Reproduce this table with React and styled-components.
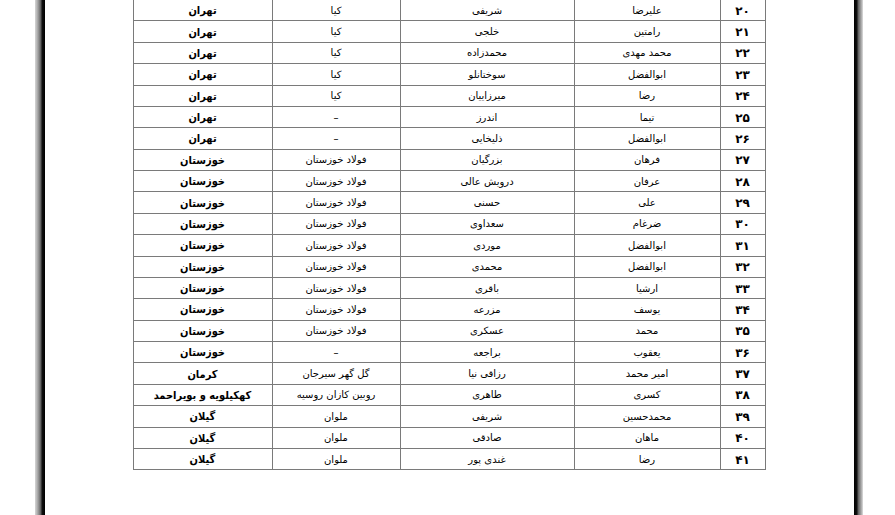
import React from "react";
import styled, { createGlobalStyle } from "styled-components";

const GlobalStyle = createGlobalStyle`
  html, body {
    margin: 0;
    padding: 0;
    background: #ffffff;
    overflow: hidden;
  }
`;

const Viewer = styled.div`
  display: flex;
  width: 895px;
  height: 515px;
  background: #ffffff;
`;

const Gutter = styled.div`
  width: ${(p) => p.width}px;
  flex: none;
`;

const PageEdge = styled.div`
  width: ${(p) => p.width}px;
  flex: none;
  background: ${(p) =>
    p.side === "left"
      ? "linear-gradient(to right, #d6d6d6 0px, #b4b4b4 2px, #8a8a8a 4px, #5a5a5a 6px, #111 7px, #000 10px)"
      : "linear-gradient(to right, #000 0px, #111 3px, #5a5a5a 4px, #8a8a8a 6px, #bdbdbd 8px, #e0e0e0 9px)"};
`;

const Page = styled.div`
  flex: 1;
  display: flex;
  justify-content: center;
  align-items: flex-start;
  background: #ffffff;
  margin-top: -1px;
`;

const Table = styled.table`
  direction: rtl;
  border-collapse: collapse;
  table-layout: fixed;
  width: 633px;
  margin-right: 1px;
  font-family: "DejaVu Sans", "Noto Sans", sans-serif;
  color: #000;
`;

const Row = styled.tr`
  height: 21.38px;
`;

const Cell = styled.td`
  border: 1px solid #7a7a7a;
  padding: 1px 2px 0;
  text-align: center;
  vertical-align: middle;
  white-space: nowrap;
  overflow: hidden;
  font-size: 10px;
  font-weight: 400;
  line-height: 1;
`;

const Province = styled(Cell)`
  font-family: "DejaVu Sans Condensed", "DejaVu Sans", sans-serif;
  font-size: 11px;
  font-weight: 700;
`;

const Num = styled(Cell)`
  font-size: 12px;
  font-weight: 700;
`;

const toFa = (n) => String(n).replace(/\d/g, (d) => "۰۱۲۳۴۵۶۷۸۹"[d]);

const players = [
  [20, "علیرضا", "شریفی", "کیا", "تهران"],
  [21, "رامتین", "خلجی", "کیا", "تهران"],
  [22, "محمد مهدی", "محمدزاده", "کیا", "تهران"],
  [23, "ابوالفضل", "سوختانلو", "کیا", "تهران"],
  [24, "رضا", "میرزاییان", "کیا", "تهران"],
  [25, "تیما", "اندرز", "–", "تهران"],
  [26, "ابوالفضل", "ذلیخایی", "–", "تهران"],
  [27, "فرهان", "بزرگیان", "فولاد خوزستان", "خوزستان"],
  [28, "عرفان", "درویش عالی", "فولاد خوزستان", "خوزستان"],
  [29, "علی", "حسنی", "فولاد خوزستان", "خوزستان"],
  [30, "ضرغام", "سعداوی", "فولاد خوزستان", "خوزستان"],
  [31, "ابوالفضل", "موردی", "فولاد خوزستان", "خوزستان"],
  [32, "ابوالفضل", "محمدی", "فولاد خوزستان", "خوزستان"],
  [33, "ارشیا", "باقری", "فولاد خوزستان", "خوزستان"],
  [34, "یوسف", "مزرعه", "فولاد خوزستان", "خوزستان"],
  [35, "محمد", "عسکری", "فولاد خوزستان", "خوزستان"],
  [36, "یعقوب", "براجعه", "–", "خوزستان"],
  [37, "امیر محمد", "رزاقی نیا", "گل گهر سیرجان", "کرمان"],
  [38, "کسری", "طاهری", "روبین کازان روسیه", "کهکیلویه و بویراحمد"],
  [39, "محمدحسین", "شریفی", "ملوان", "گیلان"],
  [40, "ماهان", "صادقی", "ملوان", "گیلان"],
  [41, "رضا", "غندی پور", "ملوان", "گیلان"],
];

const App = () => {
  return (
    <>
      <GlobalStyle />
      <Viewer>
        <Gutter width={35} />
        <PageEdge side="left" width={10} />
        <Page>
          <Table>
            <colgroup>
              <col style={{ width: 45 }} />
              <col style={{ width: 146 }} />
              <col style={{ width: 174 }} />
              <col style={{ width: 128 }} />
              <col style={{ width: 139 }} />
            </colgroup>
            <tbody>
              {players.map(([no, first, last, club, province]) => (
                <Row key={no}>
                  <Num>{toFa(no)}</Num>
                  <Cell>{first}</Cell>
                  <Cell>{last}</Cell>
                  <Cell>{club}</Cell>
                  <Province>{province}</Province>
                </Row>
              ))}
            </tbody>
          </Table>
        </Page>
        <PageEdge side="right" width={9} />
        <Gutter width={32} />
      </Viewer>
    </>
  );
};

export default App;
